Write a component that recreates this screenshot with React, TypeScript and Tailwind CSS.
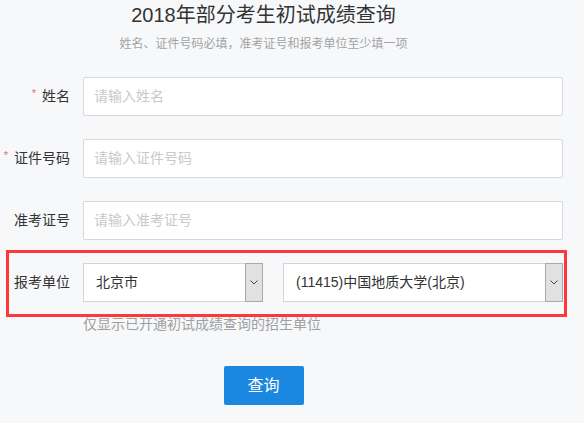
const fields = [
  { label: "姓名", placeholder: "请输入姓名", required: true },
  { label: "证件号码", placeholder: "请输入证件号码", required: true },
  { label: "准考证号", placeholder: "请输入准考证号", required: false },
];

function SelectBox({ value, className }: { value: string; className: string }) {
  return (
    <div className={`flex h-[39px] items-stretch border border-[#d4d4d4] bg-white ${className}`}>
      <div className="flex flex-1 items-center pl-[12px] text-[14px] text-[#333]">{value}</div>
      <div className="-my-px -mr-px flex w-[18px] items-center justify-center border border-[#a9a9a9] bg-[#e1e1e1]">
        <svg width="8" height="5" viewBox="0 0 8 5" fill="none">
          <polyline points="0.5,0.5 4,4 7.5,0.5" stroke="#444" strokeWidth="1" />
        </svg>
      </div>
    </div>
  );
}

export default function App() {
  return (
    <div
      className="min-h-[423px] bg-[#f7f8fa] text-[#333]"
      style={{ fontFamily: '"Liberation Sans", "Noto Sans CJK SC", sans-serif' }}
    >
      <div className="flex w-[527px] flex-col items-center">
        <h1 className="text-[20px] font-normal leading-[30px] text-[#333]">2018年部分考生初试成绩查询</h1>
        <p className="mt-[4px] text-[12px] leading-[20px] text-[#a3a3a3]">
          姓名、证件号码必填，准考证号和报考单位至少填一项
        </p>
      </div>

      <div className="mt-[23px] flex flex-col gap-[23px]">
        {fields.map((f) => (
          <div key={f.label} className="flex items-center">
            <div className="flex w-[70px] items-center justify-end text-[14px] text-[#333]">
              {f.required && <span className="-mt-[6px] mr-[6px] text-[11px] text-[#e86a6a]">*</span>}
              {f.label}
            </div>
            <div className="ml-[13px] flex h-[39px] w-[480px] items-center rounded-[2px] border border-[#d9d9d9] bg-white pl-[10px] text-[14px] text-[#c9c9c9]">
              {f.placeholder}
            </div>
          </div>
        ))}

        <div className="relative flex w-[563px] items-center">
          <div className="w-[70px] text-right text-[14px] text-[#333]">报考单位</div>
          <SelectBox value="北京市" className="ml-[13px] w-[180px]" />
          <SelectBox value="(11415)中国地质大学(北京)" className="ml-[20px] w-[280px]" />
          <div className="pointer-events-none absolute -top-[13px] -bottom-[15px] left-[6px] -right-[4px] border-[3px] border-[#ff3737]" />
        </div>
      </div>

      <p className="ml-[83px] mt-[12px] text-[14px] leading-[20px] text-[#a0a0a0]">仅显示已开通初试成绩查询的招生单位</p>

      <div className="flex w-[527px] justify-center">
        <button className="mt-[32px] h-[39px] w-[80px] rounded-[2px] bg-[#1a87e0] text-[16px] text-white">查询</button>
      </div>
    </div>
  );
}
